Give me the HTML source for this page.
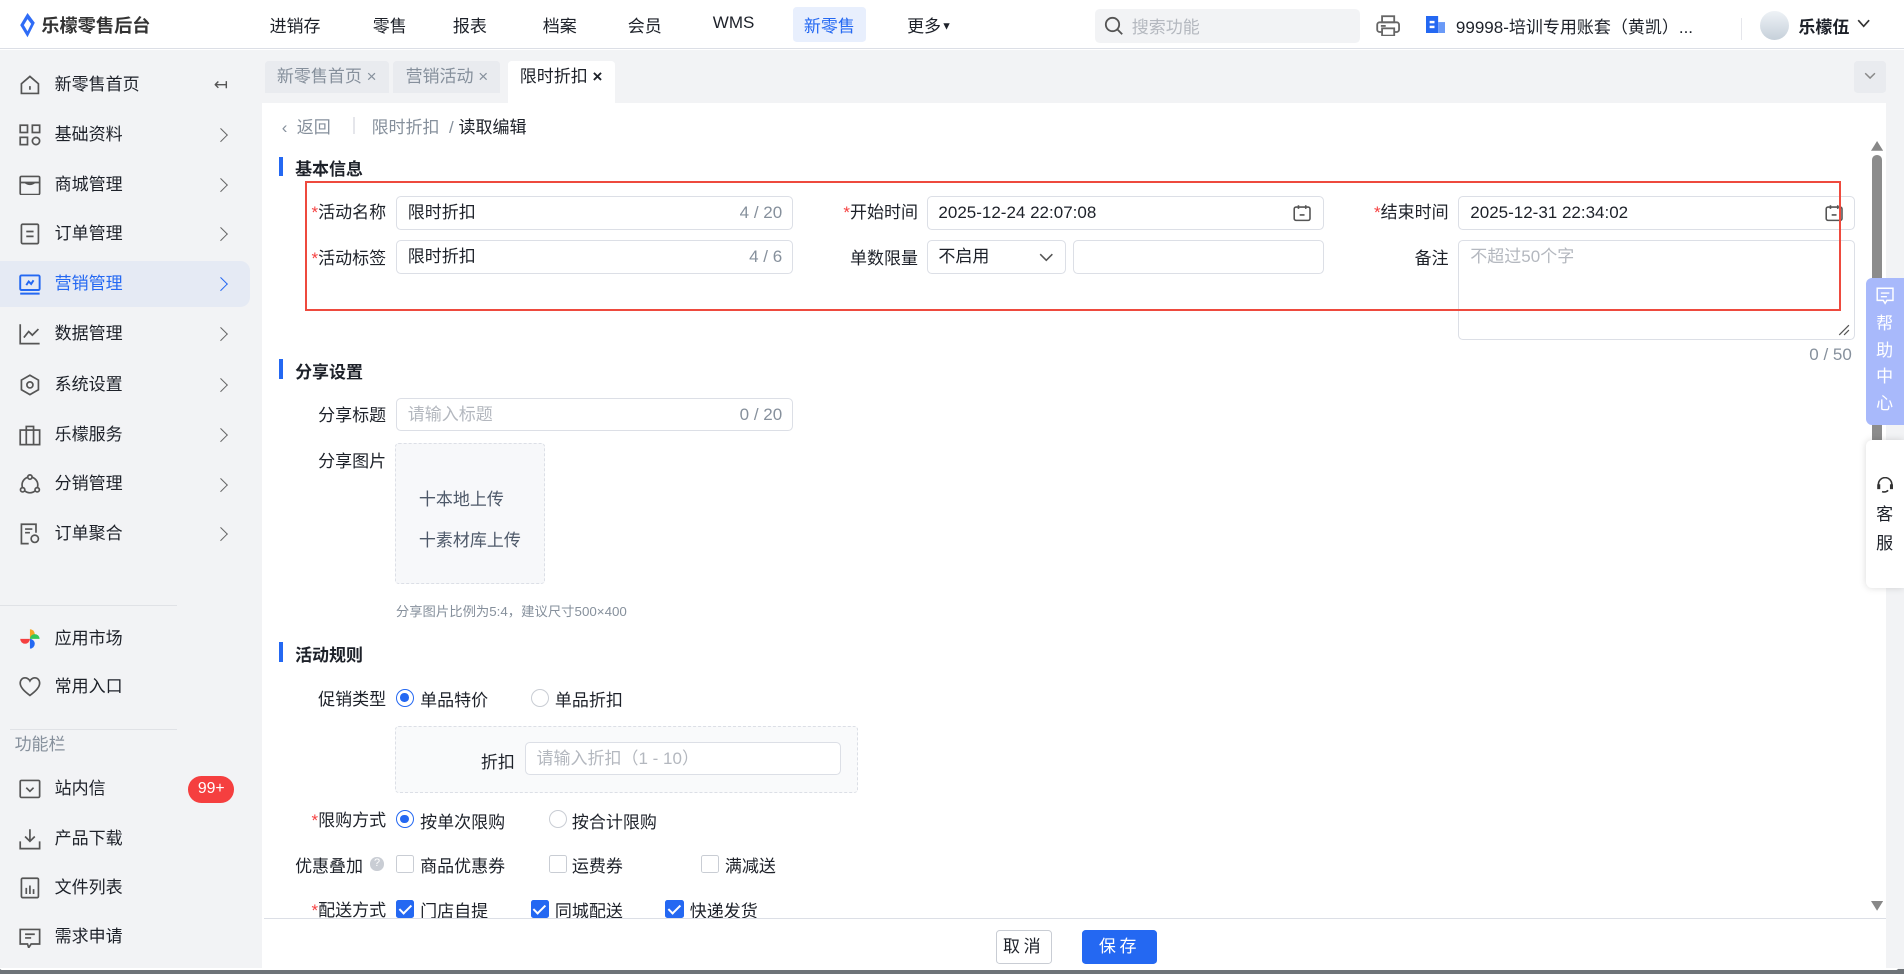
<!DOCTYPE html>
<html><head><meta charset="utf-8">
<style>
*{box-sizing:border-box;margin:0;padding:0}
html,body{width:1904px;height:974px;overflow:hidden;background:#fff}
#w{zoom:1.21429;width:1568px;height:802px;position:relative;font-family:"Liberation Sans","Noto Sans CJK SC",sans-serif;font-size:14px;color:#1d2129;overflow:hidden}
.a{position:absolute}
.top{left:0;top:0;width:1568px;height:40px;background:#fff;border-bottom:1px solid #dcdfe6}
.nav{top:10px;font-size:14px;color:#1d2129}
.side{left:0;top:41px;width:216px;height:761px;background:#f2f3f5}
.si{left:0;width:206px;height:38px;line-height:38px;padding-left:45px;font-size:14px;color:#1d2129}
.si .ic{position:absolute;left:16px;top:10px;width:18px;height:18px}
.si .ch{position:absolute;left:178px;top:15px;width:8px;height:8px;border-top:1.5px solid #666;border-right:1.5px solid #666;transform:rotate(45deg)}
.tabs{left:216px;top:41px;width:1352px;height:44px;background:#f2f3f5}
.tab{top:9px;height:27px;line-height:27px;padding:0 10px;font-size:14px;color:#86909c;background:#e9ebef;border-radius:3px 3px 0 0}
.lbl{font-size:14px;color:#1d2129;text-align:right;width:100px;margin-top:-3px}
.req:before{content:"*";color:#f53f3f}
.inp{border:1px solid #dcdfe6;border-radius:4px;height:28px;line-height:26px;padding-left:9px;font-size:14px;background:#fff}
.ph{color:#b4b8bf}
.cnt{position:absolute;right:8px;top:0;color:#86909c}
.sec{font-weight:bold;font-size:14px;padding-left:13px}
.sec:before{content:"";position:absolute;left:0;top:1px;width:3px;height:16px;background:#2468f2}
.rad{width:15px;height:15px;border-radius:50%;border:1px solid #c9cdd4;background:#fff}
.rad.on{border-color:#2468f2}
.rad.on:after{content:"";position:absolute;left:3px;top:3px;width:7px;height:7px;border-radius:50%;background:#2468f2}
.cb{width:15px;height:15px;border-radius:2px;border:1px solid #c9cdd4;background:#fff}
.cb.on{background:#2468f2;border-color:#2468f2}
.cb.on:after{content:"";position:absolute;left:4px;top:1px;width:4px;height:8px;border:solid #fff;border-width:0 2px 2px 0;transform:rotate(45deg)}
.t{margin-top:-2px}
</style></head><body><div id="w">
<!-- top bar -->
<div class="a top"></div>
<svg class="a" style="left:16px;top:11px" width="14" height="20" viewBox="0 0 14 20"><path d="M7 0 L13 8 L7 20 L1 10 Z" fill="#2f6cf6"/><path d="M7 5 L10 9 L7 15 L4 10Z" fill="#fff"/></svg>
<div class="a" style="left:34px;top:10px;font-size:15px;font-weight:bold;color:#333">乐檬零售后台</div>
<div class="a nav" style="left:222px">进销存</div>
<div class="a nav" style="left:307px">零售</div>
<div class="a nav" style="left:373px">报表</div>
<div class="a nav" style="left:447px">档案</div>
<div class="a nav" style="left:517px">会员</div>
<div class="a nav" style="left:587px;top:11px">WMS</div>
<div class="a" style="left:653px;top:6px;width:60px;height:29px;background:#e8effd;border-radius:3px"></div>
<div class="a nav" style="left:662px;color:#2468f2">新零售</div>
<div class="a nav" style="left:747px">更多<span style="font-size:9px;vertical-align:2px">▼</span></div>
<div class="a" style="left:902px;top:7px;width:218px;height:28px;background:#f2f3f5;border-radius:4px"></div>
<svg class="a" style="left:909px;top:13px" width="16" height="16" viewBox="0 0 16 16"><circle cx="7" cy="7" r="5.5" fill="none" stroke="#555" stroke-width="1.5"/><path d="M11 11 L15 15" stroke="#555" stroke-width="1.5"/></svg>
<div class="a" style="left:932px;top:11px;color:#b4b8bf">搜索功能</div>
<svg class="a" style="left:1133px;top:12px" width="20" height="18" viewBox="0 0 20 18"><rect x="5" y="1" width="10" height="5" fill="none" stroke="#666" stroke-width="1.5"/><rect x="1" y="6" width="18" height="8" rx="2" fill="none" stroke="#666" stroke-width="1.5"/><rect x="5" y="11" width="10" height="6" fill="#fff" stroke="#666" stroke-width="1.5"/><path d="M4 9h4" stroke="#666" stroke-width="1.5"/></svg>
<svg class="a" style="left:1174px;top:13px" width="16" height="14" viewBox="0 0 16 14"><rect x="0" y="0" width="10" height="14" fill="#2468f2"/><rect x="10" y="5" width="6" height="9" fill="#6a9af7"/><rect x="3" y="4" width="4" height="2" fill="#fff"/><rect x="3" y="8" width="4" height="2" fill="#fff"/></svg>
<div class="a" style="left:1199px;top:11px;font-size:14px">99998-培训专用账套（黄凯）...</div>
<div class="a" style="left:1434px;top:15px;width:1px;height:18px;background:#e5e6eb"></div>
<div class="a" style="left:1449px;top:9px;width:24px;height:24px;border-radius:50%;background:linear-gradient(#eef2f6,#c6d0da)"></div>
<div class="a" style="left:1481px;top:11px;font-weight:bold;font-size:14px">乐檬伍</div>
<svg class="a" style="left:1529px;top:16px" width="11" height="8" viewBox="0 0 11 8"><path d="M1 1 L5.5 6 L10 1" fill="none" stroke="#333" stroke-width="1.4"/></svg>

<!-- sidebar -->
<div class="a side"></div>
<div class="a si" style="top:51px">新零售首页<span class="a" style="left:176px;top:0;color:#555">↤</span><svg class="ic" viewBox="0 0 18 18"><path d="M2 8 L9 2 L16 8 V16 H2Z M9 10 V13" fill="none" stroke="#555" stroke-width="1.4"/></svg></div>
<div class="a si" style="top:92px">基础资料<span class="ch"></span><svg class="ic" viewBox="0 0 18 18"><g fill="none" stroke="#555" stroke-width="1.4"><rect x="1" y="1" width="6" height="6"/><rect x="11" y="1" width="6" height="6"/><rect x="1" y="11" width="6" height="6"/><circle cx="14" cy="14" r="3"/></g></svg></div>
<div class="a si" style="top:133px">商城管理<span class="ch"></span><svg class="ic" viewBox="0 0 18 18"><g fill="none" stroke="#555" stroke-width="1.4"><rect x="1" y="2" width="16" height="15" rx="1"/><path d="M1 7 H17 M5 7 Q9 10 13 7"/></g></svg></div>
<div class="a si" style="top:174px">订单管理<span class="ch"></span><svg class="ic" viewBox="0 0 18 18"><g fill="none" stroke="#555" stroke-width="1.4"><rect x="2" y="1" width="14" height="16" rx="1"/><path d="M6 7H12M6 11H12"/></g></svg></div>
<div class="a si" style="top:215px;background:#e5eaf4;border-radius:0 8px 8px 0;color:#2468f2">营销管理<span class="ch" style="border-color:#2468f2"></span><svg class="ic" viewBox="0 0 18 18"><g fill="none" stroke="#2468f2" stroke-width="1.6"><rect x="1" y="2" width="16" height="12" rx="1"/><path d="M1 17H17M6 10L8 7L10 9L12 6"/></g></svg></div>
<div class="a si" style="top:256px">数据管理<span class="ch"></span><svg class="ic" viewBox="0 0 18 18"><path d="M1 1V17H17M4 12L8 7L11 10L16 5" fill="none" stroke="#555" stroke-width="1.4"/></svg></div>
<div class="a si" style="top:298px">系统设置<span class="ch"></span><svg class="ic" viewBox="0 0 18 18"><g fill="none" stroke="#555" stroke-width="1.4"><path d="M9 1L16 5V13L9 17L2 13V5Z"/><circle cx="9" cy="9" r="2.5"/></g></svg></div>
<div class="a si" style="top:339px">乐檬服务<span class="ch"></span><svg class="ic" viewBox="0 0 18 18"><g fill="none" stroke="#555" stroke-width="1.4"><rect x="1" y="5" width="16" height="12"/><path d="M6 5V2H12V5M6 5V17M12 5V17"/></g></svg></div>
<div class="a si" style="top:380px">分销管理<span class="ch"></span><svg class="ic" viewBox="0 0 18 18"><g fill="none" stroke="#555" stroke-width="1.4"><circle cx="9" cy="9" r="6.5"/><circle cx="9" cy="2.5" r="1.8" fill="#f2f3f5"/><circle cx="3" cy="13" r="1.8" fill="#f2f3f5"/><circle cx="15" cy="13" r="1.8" fill="#f2f3f5"/></g></svg></div>
<div class="a si" style="top:421px">订单聚合<span class="ch"></span><svg class="ic" viewBox="0 0 18 18"><g fill="none" stroke="#555" stroke-width="1.4"><path d="M14 8V1H2V17H8"/><path d="M5 5H11M5 8H9"/><circle cx="13" cy="13" r="3"/></g></svg></div>
<div class="a" style="left:0;top:498px;width:146px;height:1px;background:#e0e2e6"></div>
<div class="a si" style="top:507px">应用市场<svg class="ic" viewBox="0 0 18 18"><path d="M9 1 A4 4 0 0 1 9 9Z" fill="#f5a623"/><path d="M9 9 A4 4 0 0 1 17 9Z" fill="#34c759"/><path d="M9 9 A4 4 0 0 1 9 17Z" fill="#2468f2"/><path d="M9 9 A4 4 0 0 1 1 9Z" fill="#f53f3f"/></svg></div>
<div class="a si" style="top:547px">常用入口<svg class="ic" viewBox="0 0 18 18"><path d="M9 16 C2 11 1 8 1 6 C1 3 3 1.5 5 1.5 C7 1.5 8.5 3 9 4 C9.5 3 11 1.5 13 1.5 C15 1.5 17 3 17 6 C17 8 16 11 9 16Z" fill="none" stroke="#555" stroke-width="1.4"/></svg></div>
<div class="a" style="left:8px;top:600px;width:138px;height:1px;background:#e0e2e6"></div>
<div class="a" style="left:12px;top:601px;color:#86909c;font-size:14px">功能栏</div>
<div class="a si" style="top:631px">站内信<svg class="ic" viewBox="0 0 18 18"><g fill="none" stroke="#555" stroke-width="1.4"><rect x="1" y="2" width="16" height="14" rx="1"/><path d="M6 8L9 11L12 8"/></g></svg></div>
<div class="a" style="left:155px;top:639px;width:38px;height:22px;border-radius:11px;background:#f53f3f;color:#fff;font-size:13px;text-align:center;line-height:22px">99+</div>
<div class="a si" style="top:672px">产品下载<svg class="ic" viewBox="0 0 18 18"><path d="M9 1V11M5 7L9 11L13 7M1 11V17H17V11" fill="none" stroke="#555" stroke-width="1.4"/></svg></div>
<div class="a si" style="top:712px">文件列表<svg class="ic" viewBox="0 0 18 18"><g fill="none" stroke="#555" stroke-width="1.4"><rect x="2" y="1" width="14" height="16" rx="1"/><path d="M6 9V14M9 7V14M12 10V14"/></g></svg></div>
<div class="a si" style="top:753px">需求申请<svg class="ic" viewBox="0 0 18 18"><g fill="none" stroke="#555" stroke-width="1.4"><path d="M1 2H17V14H10L8 17L7 14H1Z"/><path d="M5 6H13M5 9H10"/></g></svg></div>

<!-- tabs -->
<div class="a tabs"></div>
<div class="a tab" style="left:218px;top:50px">新零售首页 ×</div>
<div class="a tab" style="left:324px;top:50px">营销活动 ×</div>
<div class="a tab" style="left:418px;top:50px;background:#fff;color:#1d2129;height:35px">限时折扣 <b>×</b></div>
<div class="a" style="left:1527px;top:50px;width:26px;height:27px;background:#e9ebef;border-radius:3px"></div>
<svg class="a" style="left:1535px;top:59px" width="10" height="7" viewBox="0 0 10 7"><path d="M1 1L5 5L9 1" fill="none" stroke="#888" stroke-width="1.2"/></svg>
<div class="a" style="left:1553px;top:85px;width:15px;height:717px;background:#f2f3f5"></div>

<!-- content -->
<div class="a" style="left:232px;top:93px;color:#86909c">‹ &nbsp;返回</div>
<div class="a" style="left:291px;top:96px;width:1px;height:14px;background:#e5e6eb"></div>
<div class="a" style="left:306px;top:93px;color:#86909c">限时折扣 &nbsp;/ <span style="color:#1d2129">读取编辑</span></div>
<div class="a sec" style="left:230px;top:128px">基本信息</div>

<div class="a lbl req" style="left:218px;top:166px">活动名称</div>
<div class="a inp" style="left:326px;top:161px;width:327px">限时折扣<span class="cnt">4 / 20</span></div>
<div class="a lbl req" style="left:656px;top:166px">开始时间</div>
<div class="a inp" style="left:763px;top:161px;width:327px">2025-12-24 22:07:08</div>
<svg class="a" style="left:1065px;top:168px" width="15" height="15" viewBox="0 0 15 15"><g fill="none" stroke="#555" stroke-width="1.3"><rect x="1" y="2.5" width="13" height="11" rx="1.5"/><path d="M4.5 1V4M10.5 1V4M5.5 9H9.5"/></g></svg>
<div class="a lbl req" style="left:1093px;top:166px">结束时间</div>
<div class="a inp" style="left:1201px;top:161px;width:327px">2025-12-31 22:34:02</div>
<svg class="a" style="left:1503px;top:168px" width="15" height="15" viewBox="0 0 15 15"><g fill="none" stroke="#555" stroke-width="1.3"><rect x="1" y="2.5" width="13" height="11" rx="1.5"/><path d="M4.5 1V4M10.5 1V4M5.5 9H9.5"/></g></svg>

<div class="a lbl req" style="left:218px;top:204px">活动标签</div>
<div class="a inp" style="left:326px;top:198px;width:327px">限时折扣<span class="cnt">4 / 6</span></div>
<div class="a lbl" style="left:656px;top:204px">单数限量</div>
<div class="a inp" style="left:763px;top:198px;width:115px">不启用</div>
<svg class="a" style="left:856px;top:208px" width="12" height="8" viewBox="0 0 12 8"><path d="M1 1L6 6L11 1" fill="none" stroke="#555" stroke-width="1.3"/></svg>
<div class="a inp" style="left:884px;top:198px;width:206px"></div>
<div class="a lbl" style="left:1093px;top:204px">备注</div>
<div class="a inp ph" style="left:1201px;top:198px;width:327px;height:82px">不超过50个字</div>
<svg class="a" style="left:1514px;top:267px" width="10" height="10" viewBox="0 0 10 10"><path d="M1 9L9 1M5 9L9 5" stroke="#555" stroke-width="1"/></svg>
<div class="a" style="left:1490px;top:284px;color:#86909c">0 / 50</div>
<div class="a" style="left:251px;top:149px;width:1265px;height:107px;border:2px solid #ee4a3e"></div>

<div class="a sec" style="left:230px;top:295px">分享设置</div>
<div class="a lbl" style="left:218px;top:333px">分享标题</div>
<div class="a inp ph" style="left:326px;top:328px;width:327px;height:27px">请输入标题<span class="cnt">0 / 20</span></div>
<div class="a lbl" style="left:218px;top:371px">分享图片</div>
<div class="a" style="left:325px;top:365px;width:124px;height:116px;border:1px dashed #dcdfe6;border-radius:3px;background:#f7f8fa"></div>
<div class="a" style="left:345px;top:399px;color:#4e5969">十本地上传</div>
<div class="a" style="left:345px;top:433px;color:#4e5969">十素材库上传</div>
<div class="a" style="left:326px;top:495px;font-size:11px;color:#86909c">分享图片比例为5:4，建议尺寸500×400</div>

<div class="a sec" style="left:230px;top:528px">活动规则</div>
<div class="a lbl" style="left:218px;top:567px">促销类型</div>
<div class="a rad on" style="left:326px;top:567px"></div><div class="a t" style="left:346px;top:567px">单品特价</div>
<div class="a rad" style="left:437px;top:567px"></div><div class="a t" style="left:457px;top:567px">单品折扣</div>
<div class="a" style="left:325px;top:598px;width:382px;height:55px;border:1px dashed #dcdfe6;border-radius:3px;background:#f9fafb"></div>
<div class="a" style="left:396px;top:616px">折扣</div>
<div class="a inp ph" style="left:432px;top:611px;width:261px;height:27px">请输入折扣（1 - 10）</div>
<div class="a lbl req" style="left:218px;top:667px">限购方式</div>
<div class="a rad on" style="left:326px;top:667px"></div><div class="a t" style="left:346px;top:667px">按单次限购</div>
<div class="a rad" style="left:452px;top:667px"></div><div class="a t" style="left:471px;top:667px">按合计限购</div>
<div class="a t" style="left:243px;top:704px">优惠叠加</div>
<div class="a" style="left:305px;top:706px;width:11px;height:11px;border-radius:50%;background:#c9cdd4;color:#fff;font-size:9px;text-align:center;line-height:11px">?</div>
<div class="a cb" style="left:326px;top:704px"></div><div class="a t" style="left:346px;top:704px">商品优惠券</div>
<div class="a cb" style="left:452px;top:704px"></div><div class="a t" style="left:471px;top:704px">运费券</div>
<div class="a cb" style="left:577px;top:704px"></div><div class="a t" style="left:597px;top:704px">满减送</div>
<div class="a lbl req" style="left:218px;top:741px">配送方式</div>
<div class="a cb on" style="left:326px;top:741px"></div><div class="a t" style="left:346px;top:741px">门店自提</div>
<div class="a cb on" style="left:437px;top:741px"></div><div class="a t" style="left:457px;top:741px">同城配送</div>
<div class="a cb on" style="left:548px;top:741px"></div><div class="a t" style="left:568px;top:741px">快递发货</div>

<!-- scrollbar -->
<div class="a" style="left:1541px;top:85px;width:12px;height:672px;background:#fff"></div>
<svg class="a" style="left:1541px;top:116px" width="10" height="8" viewBox="0 0 10 8"><path d="M5 0L10 8H0Z" fill="#888"/></svg>
<div class="a" style="left:1542px;top:128px;width:8px;height:285px;background:#8c8c8c;border-radius:4px"></div>
<svg class="a" style="left:1541px;top:742px" width="10" height="8" viewBox="0 0 10 8"><path d="M0 0H10L5 8Z" fill="#888"/></svg>

<!-- help -->
<div class="a" style="left:1537px;top:229px;width:31px;height:121px;background:#a8b9fb;border-radius:5px 0 0 5px"></div>
<svg class="a" style="left:1545px;top:236px" width="15" height="15" viewBox="0 0 15 15"><path d="M1 1H14V11H9L7.5 13.5L6 11H1Z M4 5H11M4 8H9" fill="none" stroke="#fff" stroke-width="1.2"/></svg>
<div class="a" style="left:1545px;top:256px;color:#fff;font-size:14px;line-height:22px;width:16px">帮助中心</div>
<div class="a" style="left:1537px;top:362px;width:31px;height:122px;background:#fff;border-radius:5px 0 0 5px;box-shadow:0 0 6px rgba(0,0,0,.15)"></div>
<svg class="a" style="left:1545px;top:393px" width="15" height="14" viewBox="0 0 15 14"><path d="M2 8V6A5.5 5.5 0 0 1 13 6V8M5 12Q8 13 10 11" fill="none" stroke="#333" stroke-width="1.3"/><rect x="1" y="6" width="2.5" height="4" fill="#333"/><rect x="11.5" y="6" width="2.5" height="4" fill="#333"/></svg>
<div class="a" style="left:1545px;top:412px;font-size:14px;line-height:24px;width:16px">客服</div>

<!-- footer -->
<div class="a" style="left:217px;top:756px;width:1336px;height:42px;background:#fff;border-top:1px solid #dcdfe6"></div>
<div class="a" style="left:820px;top:766px;width:46px;height:28px;border:1px solid #c9cdd4;border-radius:3px;text-align:center;line-height:26px;letter-spacing:3px">取消</div>
<div class="a" style="left:891px;top:766px;width:62px;height:28px;background:#2468f2;border-radius:3px;color:#fff;text-align:center;line-height:28px;letter-spacing:3px">保存</div>
<div class="a" style="left:0;top:798px;width:1568px;height:4px;background:#6e7378"></div>
<div class="a" style="left:0;top:797px;width:1563px;height:2px;background:#fff;border-radius:0 0 6px 6px"></div>
</div></body></html>
